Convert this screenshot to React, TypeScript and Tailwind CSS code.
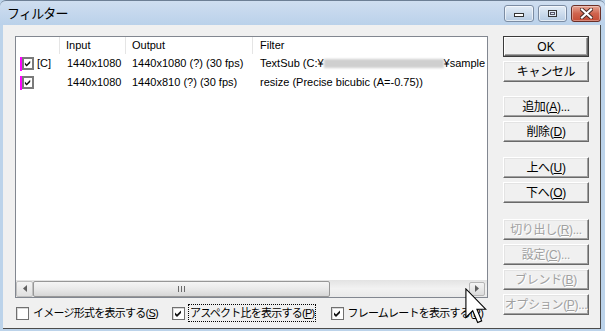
import React from "react";

function Check() {
  return (
    <svg width="9" height="9" viewBox="0 0 9 9" className="block">
      <polygon points="1,3.5 3,5.5 7,1.5 7,4 3,8 1,6" fill="#111" />
    </svg>
  );
}

function Box({ checked }: { checked?: boolean }) {
  return (
    <div className="w-[13px] h-[13px] border border-[#707070] bg-white shadow-[inset_1px_1px_0_#d8d8d8] flex items-center justify-center shrink-0">
      {checked ? <Check /> : null}
    </div>
  );
}

function Btn({
  children,
  disabled,
  def,
  mt,
}: {
  children: React.ReactNode;
  disabled?: boolean;
  def?: boolean;
  mt?: string;
}) {
  const base =
    "h-[21px] w-[86px] flex items-center justify-center whitespace-nowrap text-[12px] tracking-[-0.3px] bg-[#f0f0f0] border border-t-white border-l-white border-r-[#696969] border-b-[#696969] shadow-[inset_-1px_-1px_0_#a0a0a0,inset_1px_1px_0_#e3e3e3]";
  const txt = disabled
    ? "text-[#a0a0a0] [text-shadow:1px_1px_0_#ffffff]"
    : "text-black";
  if (def) {
    return (
      <div className={`border border-[#3a3a3a] w-[86px] shrink-0 ${mt ?? ""}`}>
        <div className={`h-[19px] w-[84px] flex items-center justify-center text-[12px] bg-[#f0f0f0] border border-t-white border-l-white border-r-[#696969] border-b-[#696969] shadow-[inset_-1px_-1px_0_#a0a0a0] ${txt}`}>
          {children}
        </div>
      </div>
    );
  }
  return <div className={`${base} ${txt} shrink-0 ${mt ?? ""}`}>{children}</div>;
}

function Cursor() {
  return (
    <svg
      width="22"
      height="36"
      viewBox="0 0 12 19.6"
      className="absolute left-[465px] top-[288px]"
    >
      <path
        d="M0.5 0.5 L0.5 16 L4.2 12.4 L6.9 18.8 L9.1 17.9 L6.5 11.6 L11.4 11.6 Z"
        fill="#fff"
        stroke="#000"
        strokeWidth="0.6"
        strokeLinejoin="miter"
      />
    </svg>
  );
}

function ListCheck() {
  return (
    <div className="flex items-center h-[14px]">
      <div className="w-[2px] h-[14px] bg-[#ff00ff]" />
      <div className="w-[12px] h-[13px] border-2 border-[#7a7a7a] bg-white flex items-center justify-center">
        <Check />
      </div>
    </div>
  );
}

export default function App() {
  return (
    <div className="relative w-[605px] h-[331px] overflow-hidden bg-[#bcd3ea] flex flex-col font-['Liberation_Sans','Noto_Sans_CJK_JP',sans-serif] text-[11px] text-black select-none">
      {/* title bar */}
      <div className="h-[25px] shrink-0 flex items-start justify-between bg-gradient-to-b from-[#cfdef0] to-[#bad1ea] border-t border-[#6d7f95] rounded-t-[6px]">
        <div className="pl-[7px] pt-[3px] text-[13px] tracking-[-0.8px] text-black">
          フィルター
        </div>
        <div className="flex items-start gap-[4px] pt-[4px] pr-[4px]">
          <div className="w-[30px] h-[17px] rounded-[3px] border border-[#7b8ca3] bg-gradient-to-b from-[#e4edf7] to-[#b6cbe2] shadow-[inset_0_0_0_1px_rgba(255,255,255,0.6)] flex items-end justify-center pb-[4px]">
            <div className="w-[10px] h-[4px] border border-[#333] bg-white" />
          </div>
          <div className="w-[29px] h-[17px] rounded-[3px] border border-[#7b8ca3] bg-gradient-to-b from-[#e4edf7] to-[#b6cbe2] shadow-[inset_0_0_0_1px_rgba(255,255,255,0.6)] flex items-center justify-center">
            <div className="w-[9px] h-[7px] border border-[#333] bg-[#dde7f2] flex items-center justify-center">
              <div className="w-[5px] h-[3px] border border-[#556]" />
            </div>
          </div>
          <div className="w-[30px] h-[17px] rounded-[3px] border border-[#6b2f27] bg-gradient-to-b from-[#e5a595] via-[#d0644e] to-[#c44a33] shadow-[inset_0_0_0_1px_rgba(255,255,255,0.35)] flex items-center justify-center">
            <svg width="13" height="11" viewBox="0 0 13 11">
              <path
                d="M2 1.5 L11 9.5 M11 1.5 L2 9.5"
                stroke="#4a2a24"
                strokeWidth="4"
                strokeLinecap="square"
              />
              <path
                d="M2 1.5 L11 9.5 M11 1.5 L2 9.5"
                stroke="#fff"
                strokeWidth="2.2"
                strokeLinecap="square"
              />
            </svg>
          </div>
        </div>
      </div>

      {/* client */}
      <div className="flex-1 ml-[3px] mr-[4px] mb-[2px] bg-[#f0f0f0] border-r border-b border-[#4b4b4b] flex flex-col">
        <div className="flex h-[273px] shrink-0 pt-[11px]">
          {/* list */}
          <div className="ml-[12px] w-[473px] h-[262px] border border-[#828790] bg-white flex flex-col overflow-hidden">
            <div className="h-[17px] flex text-[11px] shrink-0">
              <div className="w-[44px] border-r border-[#e5e5e5]" />
              <div className="w-[66px] border-r border-[#e5e5e5] pl-[6px] flex items-center">Input</div>
              <div className="w-[127px] border-r border-[#e5e5e5] pl-[6px] flex items-center">Output</div>
              <div className="flex-1 pl-[7px] flex items-center">Filter</div>
            </div>
            <div className="flex-1 overflow-hidden">
              <div className="h-[19px] flex items-center whitespace-nowrap">
                <div className="w-[44px] pl-[4px] flex items-center gap-[3px]">
                  <ListCheck />
                  <span>[C]</span>
                </div>
                <div className="w-[66px] pl-[7px]">1440x1080</div>
                <div className="w-[127px] pl-[6px]">1440x1080 (?) (30 fps)</div>
                <div className="flex-1 pl-[7px] flex items-center overflow-hidden">
                  <span>TextSub (C:¥</span>
                  <span className="inline-block w-[120px] h-[9px] bg-[#cfcfcf] blur-[1px] shrink-0" />
                  <span>¥sample</span>
                </div>
              </div>
              <div className="h-[19px] flex items-center whitespace-nowrap">
                <div className="w-[44px] pl-[4px] flex items-center">
                  <ListCheck />
                </div>
                <div className="w-[66px] pl-[7px]">1440x1080</div>
                <div className="w-[127px] pl-[6px]">1440x810 (?) (30 fps)</div>
                <div className="flex-1 pl-[7px]">resize (Precise bicubic (A=-0.75))</div>
              </div>
            </div>
            {/* scrollbar */}
            <div className="h-[17px] shrink-0 flex items-center bg-gradient-to-b from-[#e3e3e3] via-[#f2f2f2] to-[#e9e9e9]">
              <div className="w-[17px] h-[16px] rounded-[2px] border border-[#c0c0c0] bg-gradient-to-b from-[#f4f4f4] to-[#e0e0e0] flex items-center justify-center">
                <svg width="4" height="7" viewBox="0 0 4 7">
                  <polygon points="4,0 0,3.5 4,7" fill="#606060" />
                </svg>
              </div>
              <div className="w-[297px] h-[16px] rounded-[2px] border border-[#979797] bg-gradient-to-b from-[#f5f5f5] via-[#e9e9e9] to-[#d6d6d6] flex items-center justify-center gap-[2px]">
                <div className="w-[1px] h-[6px] bg-[#6a6a6a]" />
                <div className="w-[1px] h-[6px] bg-[#6a6a6a]" />
                <div className="w-[1px] h-[6px] bg-[#6a6a6a]" />
              </div>
              <div className="flex-1" />
              <div className="w-[16px] h-[14px] mr-[2px] rounded-[2px] border border-[#b5b5b5] bg-gradient-to-b from-[#f4f4f4] to-[#dcdcdc] flex items-center justify-center">
                <svg width="4" height="7" viewBox="0 0 4 7">
                  <polygon points="0,0 4,3.5 0,7" fill="#606060" />
                </svg>
              </div>
            </div>
          </div>

          {/* buttons */}
          <div className="ml-[15px] flex flex-col gap-[4px]">
            <Btn def>OK</Btn>
            <Btn>キャンセル</Btn>
            <Btn mt="mt-[10px]">
              追加(<u>A</u>)...
            </Btn>
            <Btn>
              削除(<u>D</u>)
            </Btn>
            <Btn mt="mt-[11px]">
              上へ(<u>U</u>)
            </Btn>
            <Btn>
              下へ(<u>O</u>)
            </Btn>
            <Btn disabled mt="mt-[12px]">
              切り出し(<u>R</u>)...
            </Btn>
            <Btn disabled>
              設定(<u>C</u>)...
            </Btn>
            <Btn disabled>
              ブレンド(<u>B</u>)
            </Btn>
            <Btn disabled>
              オプション(<u>P</u>)...
            </Btn>
          </div>
        </div>

        {/* bottom checkboxes */}
        <div className="flex-1 flex items-center pl-[13px] text-[11px] whitespace-nowrap">
          <Box />
          <span className="ml-[4px] tracking-[-0.75px]">
            イメージ形式を表示する(<u>S</u>)
          </span>
          <div className="ml-[14px]">
            <Box checked />
          </div>
          <span className="ml-[3px] px-[1px] border border-dotted border-black tracking-[-0.75px]">
            アスペクト比を表示する(<u>P</u>)
          </span>
          <div className="ml-[15px]">
            <Box checked />
          </div>
          <span className="ml-[3px] tracking-[-0.75px]">
            フレームレートを表示する(<u>R</u>)
          </span>
        </div>
      </div>

      <Cursor />
    </div>
  );
}
